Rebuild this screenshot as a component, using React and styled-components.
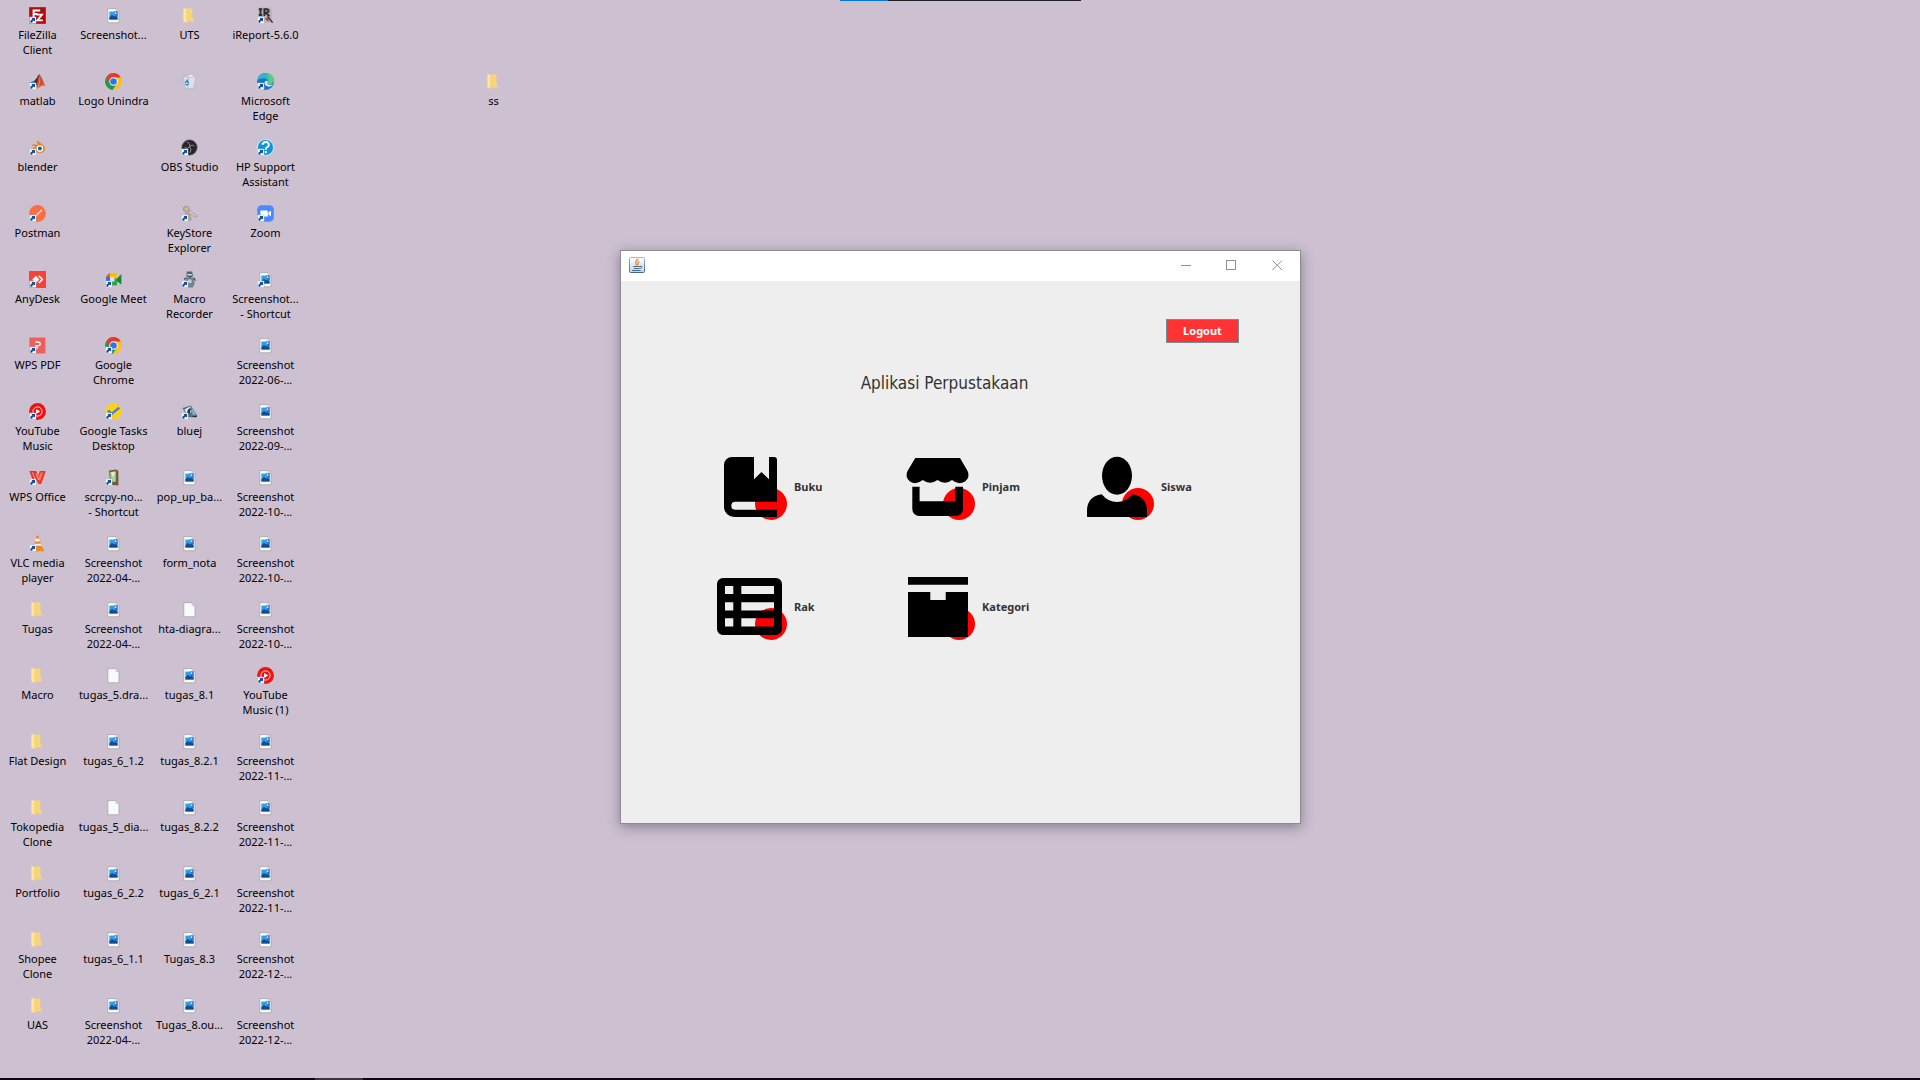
import React from 'react';
import styled, { createGlobalStyle } from 'styled-components';

const Global = createGlobalStyle`
  *, *::before, *::after { box-sizing: border-box; }
  body {
    margin: 0;
    background: #cdc0d1;
    font-family: "Noto Sans", "Open Sans", sans-serif;
    font-size: 11px;
    line-height: 15px;
    color: #000;
  }
  button { font: inherit; color: inherit; border: 0; padding: 0; background: none; }
`;

/* ---------- desktop ---------- */

const Screen = styled.div`
  position: relative;
  display: flex;
  flex-direction: column;
  min-height: 100vh;
`;

const Desktop = styled.main`
  flex: 1;
  display: grid;
  grid-auto-flow: column;
  grid-template-rows: repeat(16, 66px);
  grid-auto-columns: 75px;
  column-gap: 1px;
`;

const Shortcut = styled.button`
  grid-column: ${(p) => p.$column};
  grid-row: ${(p) => p.$row};
  display: flex;
  flex-direction: column;
  align-items: center;
  gap: 3px;
  padding-top: 7px;
  white-space: pre;
  text-align: center;
`;

const Glyph = styled.svg`
  display: block;
  flex: none;
  width: 17px;
  height: 17px;
`;

const Taskbar = styled.footer`
  display: flex;
  height: 2px;
  padding-left: 315px;
  background: #0b0710;
`;

const TaskbarItem = styled.span`
  width: 48px;
  background: #38353a;
`;

const DockedStrip = styled.div`
  position: absolute;
  top: 0;
  left: 840px;
  display: flex;
  width: 241px;
  height: 1px;
  background: #211d22;
`;

const StripAccent = styled.span`
  width: 48px;
  background: #0078d7;
`;

/* ---------- window ---------- */

const Frame = styled.section`
  position: absolute;
  top: 250px;
  left: calc(50% - 340px);
  width: 681px;
  border: 1px solid #8e8a92;
  background: #eee;
  box-shadow: 0 3px 12px rgba(30, 25, 40, 0.4);
`;

const TitleBar = styled.header`
  display: flex;
  align-items: flex-start;
  height: 30px;
  padding-left: 8px;
  background: #fff;
`;

const TitleIcon = styled.svg`
  width: 16px;
  height: 16px;
  margin: 6px auto 0 0;
`;

const WindowButton = styled.button`
  display: grid;
  place-items: center;
  width: 46px;
  height: 28px;
`;

const ControlGlyph = styled.svg`
  width: 11px;
  height: 11px;
  fill: none;
  stroke: #909090;
`;

const Content = styled.div`
  display: flex;
  flex-direction: column;
  min-height: 542px;
  padding: 38px 61px 0;
  color: #333;
`;

const Logout = styled.button`
  align-self: flex-end;
  width: 73px;
  height: 24px;
  padding-bottom: 2px;
  border: 1px solid #7a8a99;
  background: #f33;
  color: #fff;
  font-weight: 700;
`;

const Heading = styled.h1`
  margin: 28px 0 61px;
  padding-right: 32px;
  text-align: center;
  font: 400 17px/24px "DejaVu Sans Condensed", "DejaVu Sans", sans-serif;
`;

const Menu = styled.nav`
  display: grid;
  grid-template-columns: 188px 179px auto;
  row-gap: 56px;
  justify-items: start;
  padding-left: 33px;
`;

const MenuButton = styled.button`
  display: flex;
  align-items: center;
  gap: 7px;
  font-weight: 700;
`;

const MenuLabel = styled.span`
  padding-bottom: 4px;
`;

const MenuGlyph = styled.svg`
  width: 72px;
  height: 64px;
  fill: #000;
`;

/* ---------- icon drawings ---------- */

const Badge = () => (
  <g>
    <rect x=".5" y="10" width="6.500" height="6.500" fill="#fff" stroke="#b5b1bb" strokeWidth=".5" />
    <path d="M1.400 15.800V14Q1.600 12.600 3.200 12.400L2.600 11H6V14.600L4.900 13.800Q3.400 14 3.200 15.800Z" fill="#14509c" />
  </g>
);

const Page = () => (
  <g>
    <path d="M2.8 1.6H11L14 4.6V15.8H2.8Z" fill="#f8fafb" stroke="#a5a3a8" strokeWidth=".8" />
    <path d="M11 1.6V4.6H14Z" fill="#dcdcdc" stroke="#aaa" strokeWidth=".4" />
  </g>
);

const Photo = () => (
  <g>
    <Page />
    <rect x="4.4" y="4.6" width="8.2" height="8" fill="#27a3ea" />
    <path d="M4.4 10.2L7 7.8L9 9.4L10.2 8.8L12.6 10.4V12.6H4.4Z" fill="#174b8f" />
    <path d="M8.8 4.6H12.6V9.8L10.2 8.6Z" fill="#3a6fd0" />
    <circle cx="10.5" cy="6.2" r=".9" fill="#d8f2ff" />
  </g>
);

const ChromeArt = () => (
  <g>
    <circle cx="8.5" cy="8.5" r="8.4" fill="#fcc31b" />
    <path d="M8.5 8.5L1.2 4.3A8.4 8.4 0 0 0 7.6 16.9L12 10.5Z" fill="#209a50" />
    <path d="M1.2 4.3A8.4 8.4 0 0 1 15.9 4.5H8.5L5 10.5Z" fill="#e33b2e" />
    <circle cx="8.5" cy="8.5" r="4.2" fill="#fff" />
    <circle cx="8.5" cy="8.5" r="3.3" fill="#2d74e8" />
  </g>
);

const drawings = {
  page: <Page />,
  photo: <Photo />,
  photoLink: <Photo />,
  folder: (
    <g>
      <path d="M5 1.4H11.400V10.400H12.600V14.600H5Z" fill="#f7d578" />
      <path d="M2.4 1.4H4.400L6.400 3V16L2.4 14.4Z" fill="#ffe7a0" />
      <path d="M5.4 2.4L6.4 3V16L5.4 15.4Z" fill="#efca68" />
    </g>
  ),
  filezilla: (
    <g>
      <rect x=".5" y=".5" width="16" height="16" fill="#b30b0b" stroke="#8f0000" strokeDasharray="1 1" />
      <path d="M4.600 12V3.500H11.200M4.600 7H8.4" fill="none" stroke="#fff" strokeWidth="2" />
      <path d="M7.4 7.6H13L8.4 13.4H13.8" fill="none" stroke="#fff" strokeWidth="1.8" />
    </g>
  ),
  matlab: (
    <g>
      <path d="M.8 9.8L5.4 7.6L8 10.8L5 13.6Z" fill="#3b79b5" />
      <path d="M5.4 7.6Q8 5.6 9.2 2.2L10.6 1L8.4 11.6L6 13Z" fill="#3a3148" />
      <path d="M10.4 1Q13.6 5 16.2 13.4Q13.6 11 11.2 13.8L8.6 15.8L7.4 12.4Q9.6 6 10.4 1Z" fill="#d8502a" />
      <path d="M10.6 3Q11.4 8 10 14.2L8.6 15.4Q10.6 9 10.6 3Z" fill="#f6a24a" />
    </g>
  ),
  blender: (
    <g>
      <path d="M7.4 2.6L9 2L13.4 5.4Q16.2 7 16 10Q15.2 14 10.8 14Q6.6 13.8 6 10.2L2 13L.8 11.8L6.6 7H3.2V5.4H9.2Z" fill="#e98420" />
      <circle cx="10.9" cy="9.6" r="3.3" fill="#fff" />
      <circle cx="10.9" cy="9.6" r="2" fill="#225d94" />
    </g>
  ),
  postman: (
    <g>
      <circle cx="8.5" cy="8.5" r="8.4" fill="#ff6e40" />
      <path d="M6 11L11 5.8Q12 4 13.2 4.6Q13.6 6 12 6.8L7.4 11.2Z" fill="#ffe6da" />
    </g>
  ),
  anydesk: (
    <g>
      <rect width="17" height="17" fill="#f5433a" />
      <path d="M6.8 4.8L10.4 8.4L6.8 12L3.2 8.4Z" fill="#fff" />
      <path d="M9.8 4.8L13.4 8.4L9.8 12" fill="none" stroke="#fff" strokeWidth="1.5" />
    </g>
  ),
  wpspdf: (
    <g>
      <rect y=".6" x=".4" width="16" height="16" rx="1" fill="#e9605f" />
      <path d="M6 8.8H9.6Q11.4 8.4 11.2 6.6Q11 5 9.4 5H6.4M8 8.8V12" fill="none" stroke="#fff" strokeWidth="1.3" />
    </g>
  ),
  ytmusic: (
    <g>
      <circle cx="8.5" cy="8.5" r="8.4" fill="#f60d0d" />
      <circle cx="8.5" cy="8.5" r="4.6" fill="none" stroke="#fff" strokeWidth=".9" />
      <path d="M7 6L11.4 8.5L7 11Z" fill="#fff" />
    </g>
  ),
  wpsoffice: (
    <g>
      <path d="M.4 2H7.4L9 7L10.8 2H16.8L12.2 15H9.6L7.4 11L5.4 12H4Z" fill="#ef3127" />
      <path d="M11.8 3.6L14 3.6L11 12.4L9 9.4Z" fill="#ff7c4a" />
      <path d="M3.400 3.400L6.400 10.400M7.200 4.400L9.600 11" stroke="#ffc4b8" strokeWidth=".8" />
    </g>
  ),
  vlc: (
    <g>
      <path d="M3.2 12H13.6L15.2 16.2H1.8Z" fill="#f08a18" />
      <path d="M7.4.8H9.4L12.6 12.2Q8.4 14.2 4.4 12.2Z" fill="#f0851a" />
      <path d="M6.6 3.6H10.2L11 6.4H5.8ZM5.2 8.8H11.6L12.2 10.8H4.8Z" fill="#f2f2f2" />
    </g>
  ),
  chrome: <ChromeArt />,
  chromeLink: <ChromeArt />,
  meet: (
    <g>
      <path d="M1 5.6L4.6 2H11.6V6H5V12H1Z" fill="#fbbc04" />
      <path d="M1 5.6L4.6 2V5.6Z" fill="#e94235" />
      <path d="M1 5.6H5V13H1Z" fill="#2b71ee" />
      <path d="M5 10.4H11.6V14.4H5Z" fill="#27a447" />
      <path d="M11.6 8L16.4 3V13.6L11.6 10Z" fill="#118739" />
      <path d="M5 5.8H9.600V10.4H5Z" fill="#e4dfe8" />
      <path d="M9.6 2H12V8L9.6 7Z" fill="#fbbc04" />
      <path d="M9.600 7L12 8V14H9.600Z" fill="#27a447" />
    </g>
  ),
  tasks: (
    <g>
      <circle cx="8.5" cy="8.5" r="8.4" fill="#fcd116" />
      <path d="M3 7.6L6.8 10.8L14.2 4.6" fill="none" stroke="#3f7de0" strokeWidth="2.4" />
    </g>
  ),
  scrcpy: (
    <g>
      <path d="M4 1.6L11.4.4L13.4 2V16.4L5.4 15.8Z" fill="#7b5a33" />
      <path d="M5.2 3L10.8 2.2V12.8L5.8 13Z" fill="#a5d3a0" />
      <path d="M6 3.6L10.2 3L8 8.6Z" fill="#e0f2dc" />
    </g>
  ),
  bin: (
    <g>
      <path d="M2.4 3L12.4 2L14.8 3.4L12.8 15L6 16L3.8 14.4Z" fill="#dde1e7" stroke="#aab0ba" strokeWidth=".6" />
      <path d="M2.4 3L7 4.6L14.8 3.4M7 4.6L6.6 16" fill="none" stroke="#a9afb9" strokeWidth=".6" />
      <path d="M7 3.2L10 1.8L12.6 3Z" fill="#fff" />
      <path d="M4.2 9.8L6.4 7.4L7.4 10.6M4.4 11.6H7.6" fill="none" stroke="#2582d4" strokeWidth="1.4" />
    </g>
  ),
  obs: (
    <g>
      <circle cx="8.5" cy="8.5" r="7.8" fill="#262529" stroke="#8c8890" strokeWidth=".7" />
      <path d="M6 3.4Q9.2 3.4 8.8 8Q11 4.6 13.4 7.4M8.8 8Q11.4 11 8.8 13.8M3.6 8.6Q6.4 10.6 8.8 8" fill="none" stroke="#8f8d92" strokeWidth="1" />
    </g>
  ),
  keystore: (
    <g>
      <path d="M2.4 2.4Q6-.6 8.4 3Q9.4 5.4 7.6 7L10.4 14.4L8.4 16L4.4 7.6Q1.6 6 2.4 2.4Z" fill="#b5aca6" stroke="#7f7873" strokeWidth=".4" />
      <path d="M8 5L16.6 11.2L13.6 12L7.6 8Z" fill="#ccc8c4" stroke="#8d8683" strokeWidth=".5" />
      <path d="M4 3L7 2.6L6.4 5.4Z" fill="#e8c46a" />
      <path d="M8.4 8L11 9.4L10 10.6Z" fill="#d9a64b" />
    </g>
  ),
  recorder: (
    <g>
      <path d="M5.8.6H11.2L12 5.6L8.8 7.6L5.4 5.6Z" fill="#56636e" />
      <path d="M5 7H12.800L13.600 12.6L12 16.4H5.8L4.400 12Z" fill="#74818c" />
      <path d="M6.4 3H10.8V4.4H6.4Z" fill="#cfe2ee" />
      <circle cx="8.8" cy="10.2" r="2" fill="#c3cfd8" />
      <path d="M3 8.400L5.4 6.6M12.4 6.6L14.600 9.6" stroke="#47525b" strokeWidth="1.3" />
    </g>
  ),
  bluej: (
    <g>
      <path d="M1.4 5L9.8 2.4L16.2 12.6L7 14Z" fill="#4d738f" />
      <path d="M3.6 6.6L9.2 3.6L10.6 9L5.8 11Z" fill="#e8edf0" />
      <path d="M6 9.6Q7 5 10 5.4L8.6 11Z" fill="#26323d" />
      <path d="M10.6 4.4L15 11.4L11.8 12Z" fill="#8fb4cc" />
      <path d="M7 14L16.2 12.6L15.6 14.2Z" fill="#1e2b36" />
    </g>
  ),
  ireport: (
    <g>
      <path d="M1.500.600H12.500L14.600 2.600V15.4H1.500Z" fill="#b4b0b3" />
      <path d="M1.8 2.2H5.200M3.5 2.2V8M1.8 8H5.2M7.400 9V2.2H9.6Q12 2.600 11.600 4.2Q11.200 5.600 8.6 5.600L12.4 9" fill="none" stroke="#2f2d2d" strokeWidth="1.900" />
      <path d="M8 11.5L11.500 14.8V10.800Z" fill="#c2321e" />
      <path d="M10.6 9.400L15.600 15.600" stroke="#333" strokeWidth="1.5" />
    </g>
  ),
  edge: (
    <g>
      <circle cx="8.5" cy="8.5" r="8.4" fill="#1675c4" />
      <path d="M.4 7Q2 .2 8.8.1Q16.4.6 16.9 7.6Q16.6 11 12.6 11.2Q9.6 11 10.8 8.6Q10.6 5.4 6.8 5.2Q2.8 5.2.4 7Z" fill="#2fb6cf" />
      <path d="M9 .1Q16.4.8 16.9 7.6Q16.6 11 12.6 11.2Q10.6 11 10.6 10Q13.8 6 9 .1Z" fill="#5bcf72" />
      <path d="M10.8 8.4Q9.4 11.4 13 11.8Q15 11.8 16.2 11.2Q14.4 14 11.2 13.6Q7.2 12.6 7.6 9Q9.6 6.6 10.8 8.4Z" fill="#d5e9f2" />
    </g>
  ),
  help: (
    <g>
      <circle cx="8.5" cy="8.5" r="8" fill="#0a96d6" stroke="#e8f6fc" strokeWidth=".8" />
      <path d="M5.400 5.8Q6 3 8.8 3Q12 3.2 11.800 6Q11.600 7.600 9.8 8.4Q8.8 9 8.8 10.8M8.800 12V14.200" fill="none" stroke="#fff" strokeWidth="2" />
    </g>
  ),
  zoom: (
    <g>
      <rect x=".2" y=".2" width="16.6" height="16.6" rx="4.4" fill="#4a8cff" />
      <path d="M3.4 5.6H9.6Q10.8 5.6 10.8 7V11.4H5Q3.4 11.4 3.4 10ZM11.4 7.6L14 5.6V11.4L11.4 9.6Z" fill="#fff" />
    </g>
  ),
};

const linked = new Set([
  'photoLink', 'filezilla', 'matlab', 'blender', 'postman', 'anydesk', 'wpspdf', 'ytmusic',
  'wpsoffice', 'vlc', 'chromeLink', 'meet', 'tasks', 'scrcpy', 'obs', 'keystore', 'recorder',
  'bluej', 'ireport', 'edge', 'help', 'zoom',
]);

/* ---------- desktop contents, column by column ---------- */

const columns = [
  [
    ['filezilla', 'FileZilla\nClient'], ['matlab', 'matlab'], ['blender', 'blender'], ['postman', 'Postman'],
    ['anydesk', 'AnyDesk'], ['wpspdf', 'WPS PDF'], ['ytmusic', 'YouTube\nMusic'], ['wpsoffice', 'WPS Office'],
    ['vlc', 'VLC media\nplayer'], ['folder', 'Tugas'], ['folder', 'Macro'], ['folder', 'Flat Design'],
    ['folder', 'Tokopedia\nClone'], ['folder', 'Portfolio'], ['folder', 'Shopee\nClone'], ['folder', 'UAS'],
  ],
  [
    ['photo', 'Screenshot...'], ['chrome', 'Logo Unindra'], null, null,
    ['meet', 'Google Meet'], ['chromeLink', 'Google\nChrome'], ['tasks', 'Google Tasks\nDesktop'], ['scrcpy', 'scrcpy-no...\n- Shortcut'],
    ['photo', 'Screenshot\n2022-04-...'], ['photo', 'Screenshot\n2022-04-...'], ['page', 'tugas_5.dra...'], ['photo', 'tugas_6_1.2'],
    ['page', 'tugas_5_dia...'], ['photo', 'tugas_6_2.2'], ['photo', 'tugas_6_1.1'], ['photo', 'Screenshot\n2022-04-...'],
  ],
  [
    ['folder', 'UTS'], ['bin', ''], ['obs', 'OBS Studio'], ['keystore', 'KeyStore\nExplorer'],
    ['recorder', 'Macro\nRecorder'], null, ['bluej', 'bluej'], ['photo', 'pop_up_ba...'],
    ['photo', 'form_nota'], ['page', 'hta-diagra...'], ['photo', 'tugas_8.1'], ['photo', 'tugas_8.2.1'],
    ['photo', 'tugas_8.2.2'], ['photo', 'tugas_6_2.1'], ['photo', 'Tugas_8.3'], ['photo', 'Tugas_8.ou...'],
  ],
  [
    ['ireport', 'iReport-5.6.0'], ['edge', 'Microsoft\nEdge'], ['help', 'HP Support\nAssistant'], ['zoom', 'Zoom'],
    ['photoLink', 'Screenshot...\n- Shortcut'], ['photo', 'Screenshot\n2022-06-...'], ['photo', 'Screenshot\n2022-09-...'], ['photo', 'Screenshot\n2022-10-...'],
    ['photo', 'Screenshot\n2022-10-...'], ['photo', 'Screenshot\n2022-10-...'], ['ytmusic', 'YouTube\nMusic (1)'], ['photo', 'Screenshot\n2022-11-...'],
    ['photo', 'Screenshot\n2022-11-...'], ['photo', 'Screenshot\n2022-11-...'], ['photo', 'Screenshot\n2022-12-...'], ['photo', 'Screenshot\n2022-12-...'],
  ],
  [],
  [],
  [null, ['folder', 'ss']],
];

const menu = [
  {
    label: 'Buku',
    art: (
      <path d="M17 1H39V23.3L46.5 16L54 23.3V1H59Q62 1 62 4V45.7H20.3A4 4 0 0 0 20.3 53.7H62V61H19A10 10 0 0 1 9 51V9A8 8 0 0 1 17 1Z" />
    ),
  },
  {
    label: 'Pinjam',
    art: (
      <g>
        <path d="M12.3 2H57L64.3 14.5A8 8 0 0 1 62 25.5Q55.5 29.5 49 24Q42 29.5 34.5 24Q27 29.5 19.7 24Q13 29.5 7 25.5A8 8 0 0 1 4.8 14.5Z" />
        <path d="M9.3 30.7H16.6V45.3H52.3V30.7H60V53A7 7 0 0 1 53 60H16.3A7 7 0 0 1 9.3 53Z" />
      </g>
    ),
  },
  {
    label: 'Siswa',
    art: (
      <g>
        <ellipse cx="35" cy="19.7" rx="15" ry="19" />
        <path d="M5 61V54Q5.5 40.5 19.7 38.3Q26 46 35 46Q44 46 50.3 38.3Q64.5 40.5 65 54V61Z" />
      </g>
    ),
  },
  {
    label: 'Rak',
    art: (
      <path
        fillRule="evenodd"
        d="M8 2H61A6 6 0 0 1 67 8V53A6 6 0 0 1 61 59H8A6 6 0 0 1 2 53V8A6 6 0 0 1 8 2ZM10 10V18H18.3V10ZM26.3 10V18H59V10ZM10 26.3V34.6H18.3V26.3ZM26.3 26.3V34.6H59V26.3ZM10 42.3V50.6H18.3V42.3ZM26.3 42.3V50.6H59V42.3Z"
      />
    ),
  },
  {
    label: 'Kategori',
    art: <path d="M5 1H65V8.7H5ZM5 16H27.3V24H42.7V16H65V61H5Z" />,
  },
];

export default function App() {
  return (
    <Screen>
      <Global />
      <Desktop>
        {columns.flatMap((items, c) =>
          items.map((item, r) =>
            item && (
              <Shortcut key={`${c}-${r}`} type="button" $column={c + 1} $row={r + 1}>
                <Glyph viewBox="0 0 17 17" aria-hidden="true">
                  {drawings[item[0]]}
                  {linked.has(item[0]) && <Badge />}
                </Glyph>
                <span>{item[1]}</span>
              </Shortcut>
            )
          )
        )}
      </Desktop>

      <Taskbar>
        <TaskbarItem />
      </Taskbar>
      <DockedStrip>
        <StripAccent />
      </DockedStrip>

      <Frame>
        <TitleBar>
          <TitleIcon viewBox="0 0 16 16" aria-hidden="true">
            <defs>
              <linearGradient id="javaFace" x1="0" y1="0" x2="0" y2="1">
                <stop offset="0" stopColor="#fff" />
                <stop offset="1" stopColor="#c5d3de" />
              </linearGradient>
              <linearGradient id="javaEdge" x1="0" y1="0" x2="0" y2="1">
                <stop offset="0" stopColor="#a3b8c8" />
                <stop offset="1" stopColor="#446884" />
              </linearGradient>
            </defs>
            <rect x=".5" y=".5" width="15" height="15" rx="1" fill="url(#javaFace)" stroke="url(#javaEdge)" />
            <path d="M9.4 2Q5 4.4 7.8 8.4M10.4 4.6Q7.800 6 9.2 8.2" fill="none" stroke="#e8791e" strokeWidth="1.2" />
            <path d="M4 9.5H11M5 11.5H10.4M3 13.5H11.6M11 9.5Q13.4 8.6 12.6 10.4Q12 11.4 10.6 11.6" fill="none" stroke="#4a7190" />
          </TitleIcon>
          <WindowButton type="button" aria-label="Minimize">
            <ControlGlyph viewBox="0 0 11 11"><path d="M1 5.5H11" /></ControlGlyph>
          </WindowButton>
          <WindowButton type="button" aria-label="Maximize">
            <ControlGlyph viewBox="0 0 11 11"><rect x=".5" y=".5" width="9" height="9" /></ControlGlyph>
          </WindowButton>
          <WindowButton type="button" aria-label="Close">
            <ControlGlyph viewBox="0 0 11 11"><path d="M.5.5L10 10M10 .5L.5 10" /></ControlGlyph>
          </WindowButton>
        </TitleBar>
        <Content>
          <Logout type="button">Logout</Logout>
          <Heading>Aplikasi Perpustakaan</Heading>
          <Menu>
            {menu.map(({ label, art }) => (
              <MenuButton key={label} type="button">
                <MenuGlyph viewBox="0 0 72 64" aria-hidden="true">
                  <circle cx="56" cy="48" r="16" fill="#f00" />
                  {art}
                </MenuGlyph>
                <MenuLabel>{label}</MenuLabel>
              </MenuButton>
            ))}
          </Menu>
        </Content>
      </Frame>
    </Screen>
  );
}
